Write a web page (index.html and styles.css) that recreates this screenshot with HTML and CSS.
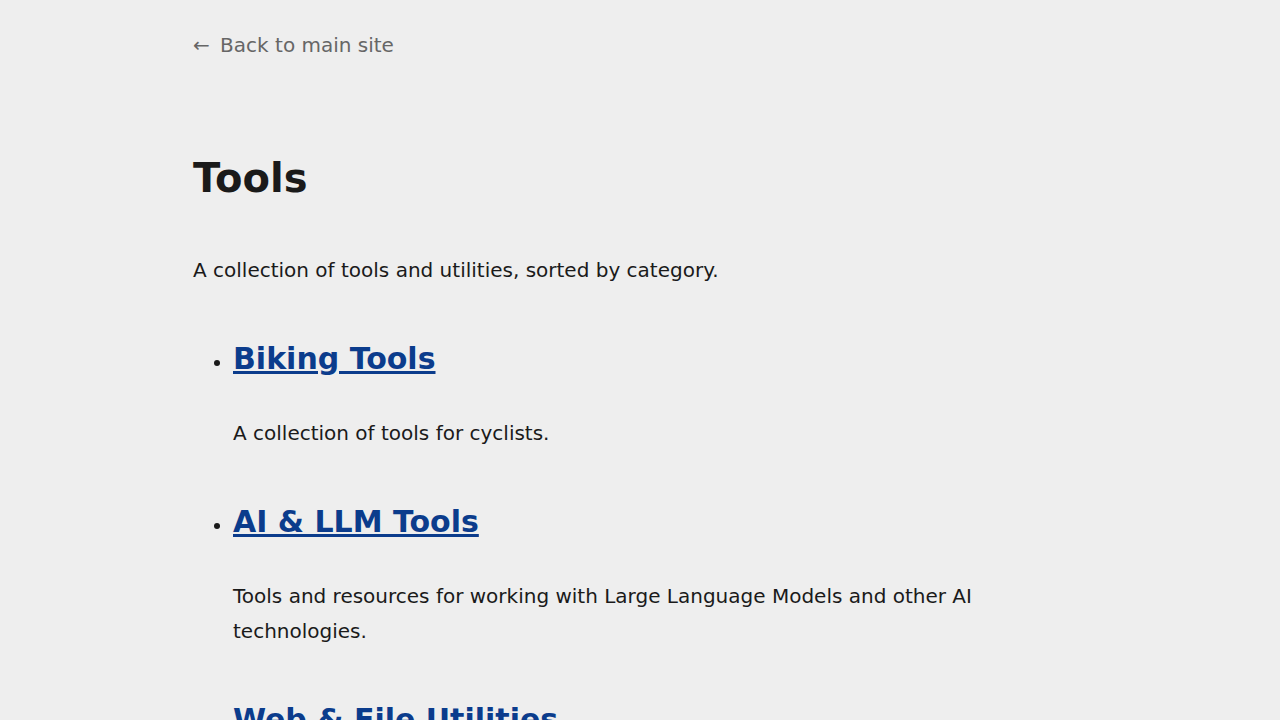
FILE: index.html
```html
<!DOCTYPE html>
<html lang="en">
<head>
<meta charset="utf-8">
<title>Tools</title>
<link rel="stylesheet" href="styles.css">
</head>
<body>
<main class="page">
  <nav class="back"><a href="#" class="back-link"><span class="arrow">←</span> Back to main site</a></nav>
  <h1 class="title">Tools</h1>
  <p class="intro">A collection of tools and utilities, sorted by category.</p>
  <ul class="categories">
    <li class="category">
      <h2 class="cat-title"><a href="#">Biking Tools</a></h2>
      <p class="cat-desc">A collection of tools for cyclists.</p>
    </li>
    <li class="category">
      <h2 class="cat-title"><a href="#">AI &amp; LLM Tools</a></h2>
      <p class="cat-desc">Tools and resources for working with Large Language Models and other AI technologies.</p>
    </li>
    <li class="category">
      <h2 class="cat-title"><a href="#">Web &amp; File Utilities</a></h2>
      <p class="cat-desc">Utilities for working with web pages and files.</p>
    </li>
  </ul>
</main>
</body>
</html>
```
FILE: styles.css
```css
html, body {
  margin: 0;
  padding: 0;
  background: #eeeeee;
}
body {
  font-family: "DejaVu Sans", sans-serif;
  font-size: 20px;
  line-height: 35px;
  color: #1a1a1a;
}
.page {
  max-width: 894px;
  margin: 0 auto;
  padding: 28px 0 40px;
}
.back {
  margin: 0;
}
.back-link {
  color: #666666;
  text-decoration: none;
}
.arrow {
  margin-right: 4px;
}
.title {
  font-size: 40px;
  line-height: 48px;
  margin: 91px 0 0;
  color: #1a1a1a;
}
.intro {
  margin: 51px 0 0;
}
.categories {
  margin: 53px 0 0;
  padding-left: 40px;
}
.category {
  margin: 0;
}
.cat-title {
  font-size: 30px;
  line-height: 36px;
  margin: 0;
}
.cat-title a {
  color: #0b3c8c;
}
.cat-desc {
  margin: 39px 0 53px;
}
```
